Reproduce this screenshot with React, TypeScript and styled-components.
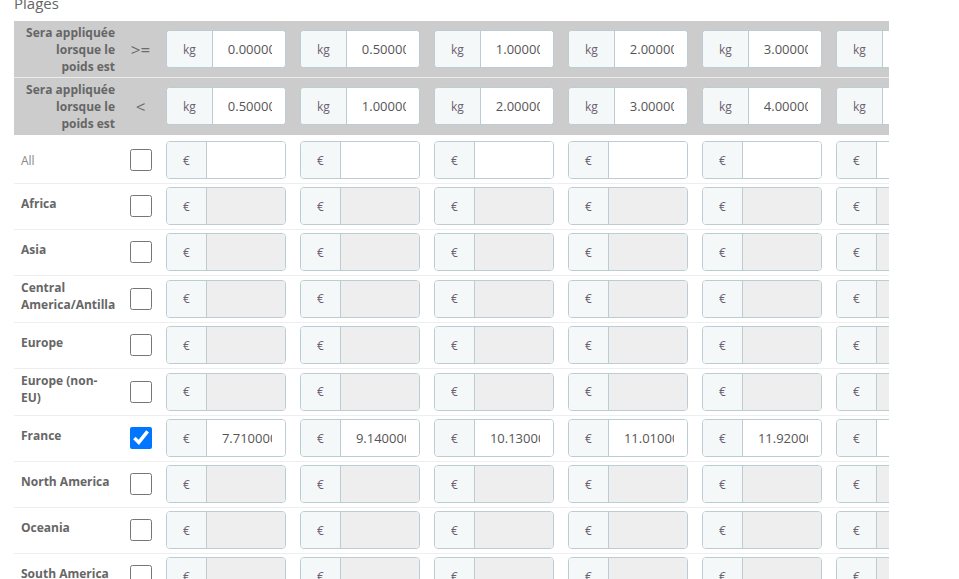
import styled, { createGlobalStyle } from 'styled-components';

const GlobalStyle = createGlobalStyle`
  *, *::before, *::after {
    box-sizing: border-box;
  }

  body {
    margin: 0;
    background: #fff;
    font-family: 'Open Sans', 'Noto Sans', sans-serif;
    color: #555;
  }
`;

type Bound = { op: string; unit: string; values: string[] };

const bounds: Bound[] = [
  {
    op: '>=',
    unit: 'kg',
    values: ['0.000000', '0.500000', '1.000000', '2.000000', '3.000000', '4.000000'],
  },
  {
    op: '<',
    unit: 'kg',
    values: ['0.500000', '1.000000', '2.000000', '3.000000', '4.000000', '5.000000'],
  },
];

type Zone = { name: string; checked: boolean; prices: string[] };

const empty = ['', '', '', '', '', ''];

const zones: Zone[] = [
  { name: 'Africa', checked: false, prices: empty },
  { name: 'Asia', checked: false, prices: empty },
  { name: 'Central America/Antilla', checked: false, prices: empty },
  { name: 'Europe', checked: false, prices: empty },
  { name: 'Europe (non-EU)', checked: false, prices: empty },
  {
    name: 'France',
    checked: true,
    prices: ['7.710000', '9.140000', '10.130000', '11.010000', '11.920000', '12.800000'],
  },
  { name: 'North America', checked: false, prices: empty },
  { name: 'Oceania', checked: false, prices: empty },
  { name: 'South America', checked: false, prices: empty },
];

function PriceGroup({
  unit,
  value,
  disabled,
}: {
  unit: string;
  value: string;
  disabled?: boolean;
}) {
  return (
    <Group>
      <Addon>{unit}</Addon>
      <ValueInput value={value} disabled={disabled} readOnly />
    </Group>
  );
}

function App() {
  return (
    <Page>
      <GlobalStyle />
      <Title>Plages</Title>
      <Frame>
        {bounds.map((b, i) => (
          <HeadRow key={i} last={i === bounds.length - 1}>
            <HeadLabel>Sera appliquée lorsque le poids est</HeadLabel>
            <Operator>{b.op}</Operator>
            {b.values.map((v, j) => (
              <Cell key={j}>
                <PriceGroup unit={b.unit} value={v} />
              </Cell>
            ))}
          </HeadRow>
        ))}

        <BodyRow first>
          <AllLabel>All</AllLabel>
          <CheckCell>
            <Check type="checkbox" readOnly />
          </CheckCell>
          {empty.map((v, j) => (
            <Cell key={j}>
              <PriceGroup unit="€" value={v} />
            </Cell>
          ))}
        </BodyRow>

        {zones.map(z => (
          <BodyRow key={z.name}>
            <ZoneLabel>{z.name}</ZoneLabel>
            <CheckCell>
              <Check type="checkbox" checked={z.checked} readOnly />
            </CheckCell>
            {z.prices.map((p, j) => (
              <Cell key={j}>
                <PriceGroup unit="€" value={p} disabled={!z.checked} />
              </Cell>
            ))}
          </BodyRow>
        ))}
      </Frame>
    </Page>
  );
}

const Page = styled.div`
  padding: 0 0 0 14px;
`;

const Title = styled.h3`
  margin: -8px 0 7px;
  font-size: 15px;
  line-height: 22px;
  font-weight: 400;
  color: #666;
`;

const Frame = styled.div`
  width: 875px;
  overflow: hidden;
`;

const Row = styled.div`
  display: grid;
  grid-template-columns: 108px 37px repeat(6, 134px);
  align-items: center;
  width: max-content;
`;

const HeadRow = styled(Row)<{ last?: boolean }>`
  height: 57px;
  background: #cccccc;
  border-bottom: 1px solid ${p => (p.last ? '#cccccc' : '#ececec')};
`;

const BodyRow = styled(Row)<{ first?: boolean }>`
  padding: ${p => (p.first ? '6px' : '3px')} 0 4px;
  border-bottom: 1px solid #eeeeee;
`;

const Cell = styled.div`
  padding: 0 7px;
`;

const HeadLabel = styled.div`
  padding: 0 7px;
  text-align: right;
  font-size: 12px;
  line-height: 17px;
  font-weight: 700;
  color: #666;
`;

const Operator = styled.div`
  text-align: center;
  font-size: 17px;
  color: #6c6c6c;
`;

const AllLabel = styled.div`
  padding: 0 7px;
  font-size: 12px;
  line-height: 17px;
  color: #888;
`;

const ZoneLabel = styled.div`
  padding: 0 6px 5px 7px;
  font-size: 12px;
  line-height: 17px;
  font-weight: 700;
  color: #666;
`;

const CheckCell = styled.div`
  display: flex;
  justify-content: center;
`;

const Check = styled.input`
  width: 22px;
  height: 22px;
  margin: 0;
`;

const Group = styled.div`
  display: flex;
  height: 38px;
  border: 1px solid #bbcdd2;
  border-radius: 4px;
  overflow: hidden;
  background: #fff;
`;

const Addon = styled.span`
  display: flex;
  align-items: center;
  padding: 0 16px;
  background: #f5f8f9;
  border-right: 1px solid #bbcdd2;
  font-size: 12px;
  color: #6b5f6f;
`;

const ValueInput = styled.input`
  flex: 1;
  min-width: 0;
  border: 0;
  padding: 0 13px 0 15px;
  font-family: 'Open Sans', 'Noto Sans', sans-serif;
  font-size: 13px;
  color: #555;
  background: #fff;
  outline: none;

  &:disabled {
    background: #eeeeee;
  }
`;

export default App;
